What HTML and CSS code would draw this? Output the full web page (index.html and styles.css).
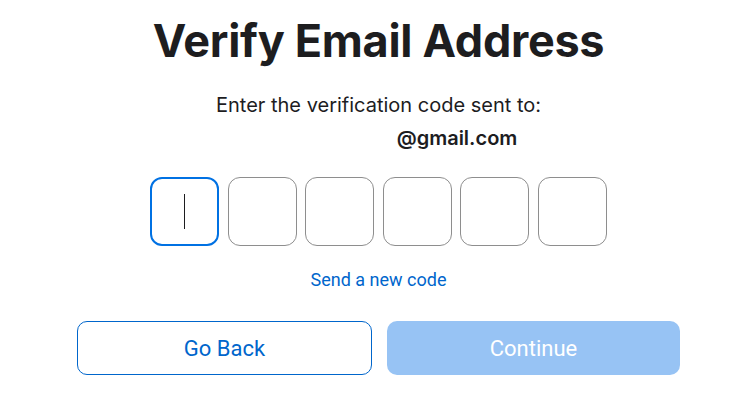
FILE: index.html
```html
<!DOCTYPE html>
<html lang="en">
<head>
<meta charset="utf-8">
<link rel="stylesheet" href="styles.css">
</head>
<body>
<main class="wrap">
  <h1 class="title">Verify Email Address</h1>
  <p class="sub">Enter the verification code sent to:</p>
  <p class="email">@gmail.com</p>
  <div class="code">
    <div class="box active"><span class="caret"></span></div>
    <div class="box"></div>
    <div class="box"></div>
    <div class="box"></div>
    <div class="box"></div>
    <div class="box"></div>
  </div>
  <a class="resend" href="#">Send a new code</a>
  <div class="actions">
    <button class="btn back">Go Back</button>
    <button class="btn cont">Continue</button>
  </div>
</main>
</body>
</html>
```
FILE: styles.css
```css
html, body { margin: 0; padding: 0; background: #fff; }
.wrap {
  width: 603px;
  margin-left: 77px;
  display: flex;
  flex-direction: column;
  align-items: center;
  font-family: Inter, "Liberation Sans", sans-serif;
  color: #1d1d1f;
}
.title {
  margin: 14px 0 0;
  font-size: 45px;
  line-height: 54px;
  font-weight: 700;
  letter-spacing: -0.3px;
}
.sub {
  margin: 24px 0 0;
  font-size: 20px;
  line-height: 26px;
  font-weight: 400;
}
.email {
  margin: 7px 0 0 157px;
  font-size: 20px;
  line-height: 26px;
  font-weight: 600;
}
.code {
  display: flex;
  gap: 8.5px;
  margin-top: 26px;
}
.box {
  width: 67px;
  height: 67px;
  border: 1px solid #8e8e8e;
  border-radius: 12px;
  display: flex;
  align-items: center;
  justify-content: center;
  box-sizing: content-box;
}
.box.active {
  width: 65px;
  height: 65px;
  border: 2px solid #0071e3;
}
.caret { width: 1px; height: 35px; background: #1d1d1f; }
.resend {
  margin-top: 23px;
  font-family: Roboto, "Liberation Sans", sans-serif;
  font-size: 18px;
  line-height: 22px;
  color: #0066cc;
  text-decoration: none;
}
.actions {
  display: flex;
  gap: 15px;
  width: 603px;
  margin-top: 30px;
}
.btn {
  flex: 1;
  height: 54px;
  border-radius: 10px;
  font-family: Roboto, "Liberation Sans", sans-serif;
  font-size: 22px;
  font-weight: 400;
  cursor: pointer;
}
.back { background: #fff; border: 1px solid #0066cc; color: #0066cc; }
.cont { background: #97c3f4; border: none; color: #fff; }
```
